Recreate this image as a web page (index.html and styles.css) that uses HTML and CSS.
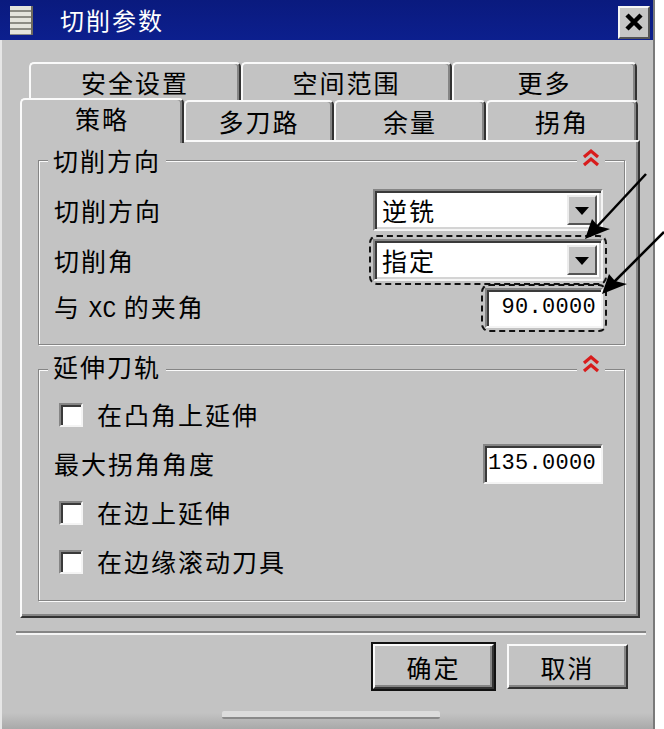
FILE: index.html
```html
<!DOCTYPE html>
<html lang="zh-CN">
<head>
    <meta charset="UTF-8">
    <meta name="viewport" content="width=device-width, initial-scale=1.0">
    <title>切削参数</title>
    <link rel="stylesheet" href="styles.css">
</head>
<body>
    <div class="dialog">
        <div class="titlebar">
            <span class="sys-icon"></span>
            <span class="title">切削参数</span>
            <span class="close-button">
                <svg width="18" height="18" viewBox="0 0 18 18"><path d="M2 2 L16 16 M16 2 L2 16" stroke="#000" stroke-width="4.5"/></svg>
            </span>
        </div>
        <div class="content">
            <div class="tab-row back">
                <div class="tab w1">安全设置</div>
                <div class="tab w2">空间范围</div>
                <div class="tab w3">更多</div>
            </div>
            <div class="tab-row front">
                <div class="tab active">策略</div>
                <div class="tab w4">多刀路</div>
                <div class="tab w5">余量</div>
                <div class="tab w5">拐角</div>
            </div>
            <div class="panel">
                <div class="group first">
                    <div class="group-head">
                        <span class="group-title">切削方向</span>
                        <svg class="chevron" width="20" height="22" viewBox="0 0 20 22"><path d="M3 10 L10 4 L17 10 M3 18 L10 12 L17 18" fill="none" stroke="#d81c1c" stroke-width="3.2"/></svg>
                    </div>
                    <div class="row">
                        <span class="label">切削方向</span>
                        <div class="combo"><span class="combo-text">逆铣</span><span class="drop"><i class="tri"></i></span></div>
                    </div>
                    <div class="row">
                        <span class="label">切削角</span>
                        <span class="mark">
                            <div class="combo"><span class="combo-text">指定</span><span class="drop"><i class="tri"></i></span></div>
                        </span>
                    </div>
                    <div class="row">
                        <span class="label">与 <span class="latin">XC</span> 的夹角</span>
                        <span class="mark">
                            <div class="field narrow">90.0000</div>
                        </span>
                    </div>
                </div>
                <div class="group second">
                    <div class="group-head">
                        <span class="group-title">延伸刀轨</span>
                        <svg class="chevron" width="20" height="22" viewBox="0 0 20 22"><path d="M3 10 L10 4 L17 10 M3 18 L10 12 L17 18" fill="none" stroke="#d81c1c" stroke-width="3.2"/></svg>
                    </div>
                    <div class="row check-row">
                        <span class="checkbox"></span><span class="label">在凸角上延伸</span>
                    </div>
                    <div class="row">
                        <span class="label">最大拐角角度</span>
                        <div class="field">135.0000</div>
                    </div>
                    <div class="row check-row">
                        <span class="checkbox"></span><span class="label">在边上延伸</span>
                    </div>
                    <div class="row check-row">
                        <span class="checkbox"></span><span class="label">在边缘滚动刀具</span>
                    </div>
                </div>
            </div>
            <div class="separator"></div>
            <div class="buttons">
                <button class="btn default">确定</button>
                <button class="btn">取消</button>
            </div>
        </div>
        <div class="footer"><span class="grip"></span></div>
    </div>

    <!-- call-out arrows drawn over the screenshot -->
    <svg class="arrows" width="664" height="729" viewBox="0 0 664 729">
        <line x1="646" y1="174" x2="592" y2="232" stroke="#000" stroke-width="2.5"/>
        <path d="M585 239 L592 219 L598 226 L610 229 Z" fill="#000"/>
        <line x1="664" y1="232" x2="609" y2="287" stroke="#000" stroke-width="2.5"/>
        <path d="M602 294 L609 274 L615 281 L627 284 Z" fill="#000"/>
    </svg>
</body>
</html>
```

FILE: styles.css
```css
body {
    margin: 0;
    padding: 0;
    background-color: #ffffff;
    font-family: "Noto Sans CJK SC", "Liberation Sans", sans-serif;
    font-size: 25px;
    line-height: 1;
    color: #000;
}
.dialog {
    width: 655px;
    height: 729px;
    background-color: #c3c3c3;
    display: flex;
    flex-direction: column;
    box-sizing: border-box;
    border-right: 2px solid #7a7a7a;
}
.titlebar {
    height: 40px;
    background: linear-gradient(#0a1a7e, #0c1f8e);
    display: flex;
    align-items: center;
    padding-left: 10px;
    padding-right: 3px;
    flex-shrink: 0;
}
.sys-icon {
    width: 23px;
    height: 29px;
    background: repeating-linear-gradient(#e4e4dc 0 4px, #8c8c84 4px 6px);
    border-right: 2px solid #6e6a5e;
    box-sizing: border-box;
}
.title {
    color: #fff;
    font-size: 24px;
    letter-spacing: 2px;
    margin-left: 27px;
    flex: 1;
}
.close-button {
    width: 32px;
    height: 33px;
    margin-top: 4px;
    background-color: #c6c6c6;
    box-sizing: border-box;
    border-top: 2px solid #f4f4f4;
    border-left: 2px solid #f4f4f4;
    border-right: 2px solid #555;
    border-bottom: 2px solid #555;
    display: flex;
    align-items: center;
    justify-content: center;
}
.content {
    flex: 1;
    padding: 22px 13px 0 18px;
    border-left: 2px solid #e6e6e6;
    display: flex;
    flex-direction: column;
}
.tab-row {
    display: flex;
    align-items: flex-end;
}
.tab-row.back {
    height: 38px;
    padding-left: 9px;
}
.tab-row.front {
    height: 40px;
    padding-left: 0;
    position: relative;
    z-index: 1;
}
.tab {
    box-sizing: border-box;
    height: 100%;
    border-top: 2px solid #fafafa;
    border-left: 2px solid #fafafa;
    border-right: 2px solid #333;
    box-shadow: inset -2px 0 0 #858585;
    border-radius: 5px 5px 0 0;
    display: flex;
    align-items: center;
    justify-content: center;
    letter-spacing: 2px;
}
.w1 { width: 212px; }
.w2 { width: 211px; }
.w3 { width: 185px; }
.w4 { width: 150px; }
.w5 { width: 152px; }
.tab.active {
    width: 164px;
    height: 45px;
    margin-bottom: -3px;
    background-color: #c3c3c3;
    padding-bottom: 6px;
}
.panel {
    height: 478px;
    box-sizing: border-box;
    border-top: 2px solid #fafafa;
    border-left: 2px solid #fafafa;
    border-right: 2px solid #333;
    border-bottom: 2px solid #333;
    box-shadow: inset -2px -2px 0 #858585;
    padding: 18px 13px 0 16px;
    display: flex;
    flex-direction: column;
    gap: 24px;
}
.group {
    border: 1px solid #858585;
    box-shadow: inset 1px 1px 0 #fafafa, 1px 1px 0 #fafafa;
    padding: 0 21px 0 15px;
    display: flex;
    flex-direction: column;
}
.group.first {
    height: 185px;
    box-sizing: border-box;
}
.group.second {
    height: 232px;
    box-sizing: border-box;
}
.group-head {
    display: flex;
    align-items: center;
    justify-content: space-between;
    height: 26px;
    margin-top: -14px;
    margin-left: -6px;
    margin-right: -2px;
}
.second .group-head {
    margin-top: -17px;
}
.group-title {
    background-color: #c3c3c3;
    padding: 0 5px;
    letter-spacing: 2px;
}
.chevron {
    background-color: #c3c3c3;
    padding: 0 4px;
    margin-top: -4px;
}
.first .group-head {
    margin-bottom: 12px;
}
.second .group-head {
    margin-bottom: 11px;
}
.row {
    height: 50px;
    display: flex;
    align-items: center;
    justify-content: space-between;
}
.first .row:last-child {
    height: 46px;
}
.second .row {
    height: 49px;
}
.check-row {
    justify-content: flex-start;
}
.label {
    letter-spacing: 2px;
    white-space: pre;
}
.latin {
    font-family: "Liberation Mono", monospace;
    font-size: 23px;
    letter-spacing: 0;
}
.combo {
    width: 230px;
    height: 42px;
    box-sizing: border-box;
    background-color: #fff;
    border-top: 2px solid #858585;
    border-left: 2px solid #858585;
    border-right: 2px solid #f4f4f4;
    border-bottom: 2px solid #f4f4f4;
    box-shadow: inset 2px 2px 0 #3a3a3a, inset -2px -2px 0 #d4d4d4;
    display: flex;
    align-items: center;
    padding: 4px 4px 4px 7px;
}
.combo-text {
    flex: 1;
    letter-spacing: 2px;
}
.drop {
    width: 30px;
    height: 30px;
    box-sizing: border-box;
    background-color: #c3c3c3;
    border-top: 2px solid #ececec;
    border-left: 2px solid #ececec;
    border-right: 2px solid #555;
    border-bottom: 2px solid #555;
    display: flex;
    align-items: center;
    justify-content: center;
}
.tri {
    width: 0;
    height: 0;
    border-left: 7px solid transparent;
    border-right: 7px solid transparent;
    border-top: 8px solid #000;
    margin-top: 2px;
}
.mark {
    display: block;
    border: 2px dashed #111;
    border-radius: 8px;
    margin: -4px -4px -4px 0;
    padding: 2px;
}
.field {
    width: 120px;
    height: 40px;
    box-sizing: border-box;
    background-color: #fff;
    border-top: 2px solid #858585;
    border-left: 2px solid #858585;
    border-right: 2px solid #f4f4f4;
    border-bottom: 2px solid #f4f4f4;
    box-shadow: inset 2px 2px 0 #3a3a3a;
    font-family: "Liberation Mono", monospace;
    font-size: 22px;
    letter-spacing: 0.3px;
    display: flex;
    align-items: center;
    justify-content: flex-end;
    padding-right: 5px;
}
.field.narrow {
    width: 118px;
}
.checkbox {
    width: 24px;
    height: 24px;
    box-sizing: border-box;
    background-color: #fff;
    border-top: 2px solid #858585;
    border-left: 2px solid #858585;
    border-right: 2px solid #f4f4f4;
    border-bottom: 2px solid #f4f4f4;
    box-shadow: inset 2px 2px 0 #3a3a3a;
    margin-left: 5px;
    margin-right: 14px;
}
.separator {
    height: 0;
    border-top: 2px solid #858585;
    border-bottom: 2px solid #f4f4f4;
    margin: 13px -6px 0 -4px;
}
.buttons {
    display: flex;
    justify-content: flex-end;
    gap: 13px;
    margin-top: 9px;
    padding-right: 12px;
}
.btn {
    width: 121px;
    height: 45px;
    box-sizing: border-box;
    background-color: #c3c3c3;
    border-top: 2px solid #fafafa;
    border-left: 2px solid #fafafa;
    border-right: 2px solid #333;
    border-bottom: 2px solid #333;
    box-shadow: inset -2px -2px 0 #858585;
    font-family: "Noto Sans CJK SC", sans-serif;
    font-size: 25px;
    letter-spacing: 2px;
    padding: 0;
    color: #000;
}
.btn.default {
    outline: 2px solid #111;
}
.footer {
    height: 16px;
    flex-shrink: 0;
    background: linear-gradient(#c3c3c3, #a9a9a9);
    border-left: 2px solid #e6e6e6;
    padding-left: 220px;
}
.grip {
    display: block;
    width: 218px;
    height: 6px;
    margin-top: -2px;
    background-color: #dcdcdc;
    border-bottom: 2px solid #8a8a8a;
    border-radius: 2px;
}
.arrows {
    position: absolute;
    top: 0;
    left: 0;
    pointer-events: none;
}
```
